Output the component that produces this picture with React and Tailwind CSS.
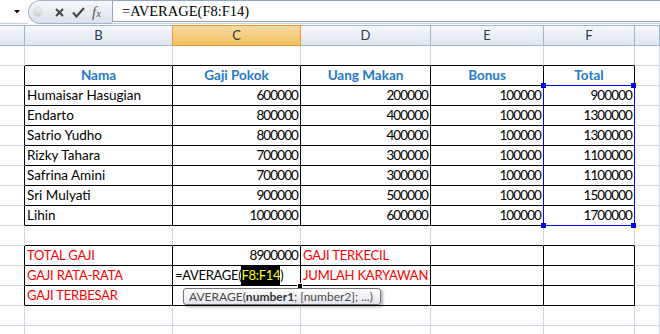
import React from 'react';

const cols = [
  { key: 'A', w: 'w-[25px]' },
  { key: 'B', w: 'w-[148px]' },
  { key: 'C', w: 'w-[128px]' },
  { key: 'D', w: 'w-[130px]' },
  { key: 'E', w: 'w-[113px]' },
  { key: 'F', w: 'w-[91px]' },
  { key: 'G', w: 'flex-1' },
];

const heads = ['Nama', 'Gaji Pokok', 'Uang Makan', 'Bonus', 'Total'];

const karyawan = [
  ['Humaisar Hasugian', 600000, 200000, 100000, 900000],
  ['Endarto', 800000, 400000, 100000, 1300000],
  ['Satrio Yudho', 800000, 400000, 100000, 1300000],
  ['Rizky Tahara', 700000, 300000, 100000, 1100000],
  ['Safrina Amini', 700000, 300000, 100000, 1100000],
  ['Sri Mulyati', 900000, 500000, 100000, 1500000],
  ['Lihin', 1000000, 600000, 100000, 1700000],
];

const rows = [6, 7, 8, 9, 10, 11, 12, 13, 14, 15, 16, 17, 18, 19, 20];

const inTable = (r, c) => c >= 1 && c <= 5 && ((r >= 7 && r <= 14) || (r >= 16 && r <= 18));

function rightBorder(r, c) {
  if ((c === 4 || c === 5) && r >= 8 && r <= 14) return 'border-r-[#0000ff]';
  if (inTable(r, c) || inTable(r, c + 1)) return 'border-r-black';
  return 'border-r-[#d0d7e5]';
}

function bottomBorder(r, c) {
  if (c === 5 && (r === 7 || r === 14)) return 'border-b-[#0000ff]';
  if (inTable(r, c) || inTable(r + 1, c)) return 'border-b-black';
  return 'border-b-[#d0d7e5]';
}

const Num = ({ v }) => <div className="text-right pr-[2px] tracking-[-0.9px]">{v}</div>;
const Label = ({ t }) => <div className="pl-[2px] text-[13px] tracking-[-0.2px] text-[#ff0000]">{t}</div>;

function cellContent(r, c) {
  if (r === 7 && c >= 1 && c <= 5) {
    return <div className="text-center font-bold text-[#2479cb]">{heads[c - 1]}</div>;
  }
  if (r >= 8 && r <= 14 && c >= 1 && c <= 5) {
    const v = karyawan[r - 8][c - 1];
    return c === 1 ? <div className="pl-[2px]">{v}</div> : <Num v={v} />;
  }
  if (r === 16) {
    if (c === 1) return <Label t="TOTAL GAJI" />;
    if (c === 2) return <Num v="8900000" />;
    if (c === 3) return <Label t="GAJI TERKECIL" />;
  }
  if (r === 17) {
    if (c === 1) return <Label t="GAJI RATA-RATA" />;
    if (c === 3) return <Label t="JUMLAH KARYAWAN" />;
    if (c === 2) {
      return (
        <>
          <div className="pl-[2px] text-[13px] tracking-[-0.3px]">
            =AVERAGE(<span className="inline-block bg-black text-[#ffff00]">F8:F14</span>)
          </div>
          <div className="absolute right-[-3px] bottom-[-4px] w-[6px] h-[6px] bg-black border border-white z-10" />
          <div className="absolute left-[10px] top-[22px] z-20 w-[198px] h-[17px] pl-[5px] whitespace-nowrap rounded-[3px] border border-[#767676] bg-gradient-to-b from-white to-[#e3e4ee] text-[12px] leading-[15px] text-[#4a4a4a] shadow-[2px_2px_3px_rgba(0,0,0,0.3)]">
            AVERAGE(<b className="text-[#333]">number1</b>; [number2]; ...)
          </div>
        </>
      );
    }
  }
  if (r === 18 && c === 1) return <Label t="GAJI TERBESAR" />;
  return null;
}

function Handles({ r, c }) {
  if (c !== 5) return null;
  if (r === 8) {
    return (
      <>
        <div className="absolute left-[-3px] top-[-3px] w-[5px] h-[5px] bg-[#0000ff] z-10" />
        <div className="absolute right-[-2px] top-[-3px] w-[5px] h-[5px] bg-[#0000ff] z-10" />
      </>
    );
  }
  if (r === 14) {
    return (
      <>
        <div className="absolute left-[-3px] bottom-[-3px] w-[5px] h-[5px] bg-[#0000ff] z-10" />
        <div className="absolute right-[-2px] bottom-[-3px] w-[5px] h-[5px] bg-[#0000ff] z-10" />
      </>
    );
  }
  return null;
}

function FormulaBar() {
  return (
    <div className="flex h-[25px] bg-white">
      <div className="w-[28px] flex flex-col">
        <div className="h-[23px] flex items-center justify-end pr-[8px]">
          <svg width="6" height="4" viewBox="0 0 6 4">
            <polygon points="0,0 6,0 3,3.5" fill="#111" />
          </svg>
        </div>
        <div className="h-[1px] bg-[#c9d3df]" />
      </div>
      <div className="w-[84px] h-[24px] flex items-center rounded-l-[12px] border border-r-0 border-[#a7b5c8] bg-gradient-to-b from-[#f5f7fa] to-[#dbe2eb]">
        <div className="ml-[4px] w-[10px] h-[10px] rounded-full bg-gradient-to-b from-[#f2f2f2] to-[#c9ccd1] border border-[#d6d9de]" />
        <svg className="ml-[12px]" width="9" height="9" viewBox="0 0 9 9">
          <path d="M1 1L8 8M8 1L1 8" stroke="#444" strokeWidth="1.9" />
        </svg>
        <svg className="ml-[8px]" width="13" height="11" viewBox="0 0 13 11">
          <path d="M1 5.5L4.5 9.5L12 1" stroke="#444" strokeWidth="2.1" fill="none" />
        </svg>
        <span className="ml-[7px] italic font-['Liberation_Serif',serif] text-[15px] leading-none text-[#5b5b5b]">
          f<span className="text-[11px]">x</span>
        </span>
      </div>
      <div className="flex-1 flex flex-col">
        <div className="h-[22px] border-t border-l border-b border-[#8ea6c3] pl-[9px] pt-[1px] font-['Liberation_Serif',serif] text-[14.5px] leading-[19px] text-black">
          =AVERAGE(F8:F14)
        </div>
        <div className="h-[1px]" />
        <div className="h-[1px] bg-[#c9d3df]" />
      </div>
    </div>
  );
}

function ColumnHeaders() {
  return (
    <div className="flex h-[21px] font-[Lato,sans-serif] text-[13px] leading-[19px]">
      {cols.map((col, i) => {
        const active = col.key === 'C';
        const nextActive = cols[i + 1]?.key === 'C';
        return (
          <div
            key={col.key}
            className={`${col.w} shrink-0 border-t border-b border-r text-center ${
              active
                ? 'bg-gradient-to-b from-[#f9dba3] to-[#f1c15e] border-[#f29536] text-[#2a3a3a]'
                : `bg-gradient-to-b from-[#f6f9fc] to-[#dfe6f0] border-t-[#9eb6ce] border-b-[#9eb6ce] text-[#2b3b4b] ${nextActive ? 'border-r-[#f29536]' : 'border-r-[#9eb6ce]'}`
            }`}
          >
            {col.key === 'A' || col.key === 'G' ? '' : col.key}
          </div>
        );
      })}
    </div>
  );
}

export default function App() {
  return (
    <div className="w-[660px] h-[334px] overflow-hidden bg-white">
      <FormulaBar />
      <ColumnHeaders />
      <div className="font-[Lato,sans-serif] text-[13.5px] leading-[19px] text-black">
        {rows.map(r => (
          <div key={r} className="flex h-[20px]">
            {cols.map((col, c) => (
              <div
                key={col.key}
                className={`${col.w} shrink-0 relative whitespace-nowrap border-r border-b ${rightBorder(r, c)} ${bottomBorder(r, c)}`}
              >
                {cellContent(r, c)}
                <Handles r={r} c={c} />
              </div>
            ))}
          </div>
        ))}
      </div>
    </div>
  );
}
